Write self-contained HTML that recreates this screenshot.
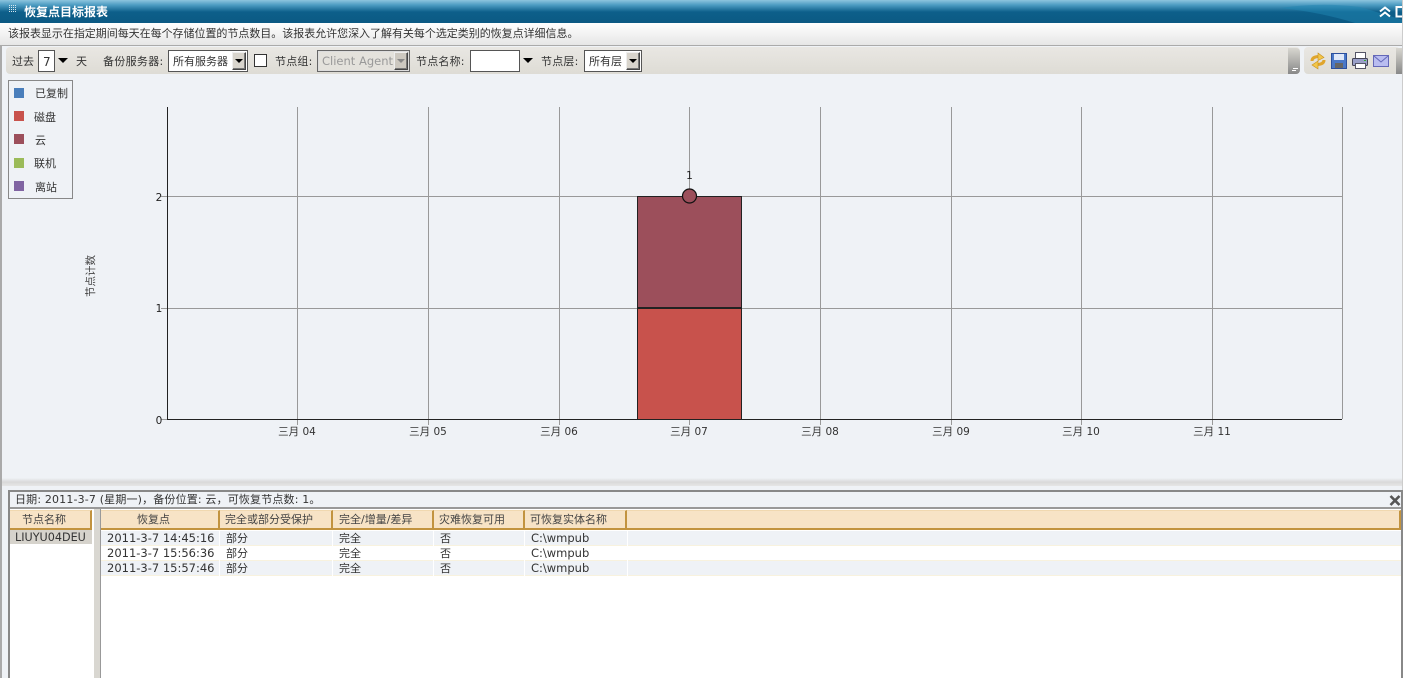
<!DOCTYPE html>
<html><head><meta charset="utf-8"><style>
html,body{margin:0;padding:0;width:1408px;height:678px;overflow:hidden;background:#eff2f6}
body{position:relative;font:11px "DejaVu Sans","Noto Sans CJK SC",sans-serif;color:#333}
.a{position:absolute;box-sizing:border-box}
.t{position:absolute;white-space:nowrap;line-height:14px;height:14px}
.sel{position:absolute;box-sizing:border-box;background:#fff;border:1px solid #fff;outline:1px solid #555;outline-offset:-1px}
.btn{position:absolute;width:14px;background:#d8d4cc;border:1px solid #444;border-top-color:#eee;border-left-color:#eee;box-sizing:border-box;box-shadow:inset -1px -1px 0 #777}
.tri{position:absolute;width:0;height:0;border-left:5px solid transparent;border-right:5px solid transparent;border-top:5px solid #000}
.h{position:absolute;top:510px;height:20px;background:#f7e3c6;border-right:2px solid #c2933f;border-bottom:2px solid #c2933f;box-sizing:border-box;border-top:1px solid #f0d8b0;text-align:left;line-height:17px;color:#444;white-space:nowrap}
.c{position:absolute;white-space:nowrap;line-height:15px;color:#333}
</style></head><body>
<div class="a" style="left:0;top:0;width:1403px;height:23px;background:linear-gradient(#8ec5de 0,#4d9cc2 5px,#0d5f8a 12px,#0c5a84 22px)"></div>
<svg class="a" style="left:1280px;top:0" width="123" height="23"><path d="M0 8Q40 2 80 7L123 20V23H75Q40 12 0 8Z" fill="#1f86b2" opacity=".5"/></svg>
<svg class="a" style="left:9px;top:5px" width="9" height="9"><g fill="#d8e8f0"><rect x="0" y="0" width="1" height="1"/><rect x="2" y="0" width="1" height="1"/><rect x="4" y="0" width="1" height="1"/><rect x="6" y="0" width="1" height="1"/><rect x="0" y="2" width="1" height="1"/><rect x="2" y="2" width="1" height="1"/><rect x="4" y="2" width="1" height="1"/><rect x="6" y="2" width="1" height="1"/><rect x="0" y="4" width="1" height="1"/><rect x="2" y="4" width="1" height="1"/><rect x="4" y="4" width="1" height="1"/><rect x="6" y="4" width="1" height="1"/><rect x="0" y="6" width="1" height="1"/><rect x="2" y="6" width="1" height="1"/><rect x="4" y="6" width="1" height="1"/><rect x="6" y="6" width="1" height="1"/></g></svg>
<div class="t" style="left:24px;top:5px;color:#fff;font-weight:bold;font-size:12px">恢复点目标报表</div>
<svg class="a" style="left:1378px;top:5px" width="26" height="13"><path d="M2 6.500 7 2.500 12 6.500M2 11.500 7 7.500 12 11.500" fill="none" stroke="#fff" stroke-width="2"/><path d="M25 2H18.500V11.500H25" fill="none" stroke="#fff" stroke-width="2"/></svg>

<div class="a" style="left:0;top:23px;width:1403px;height:23px;background:linear-gradient(#fff,#e6e6e6);border-bottom:1px solid #aaa"></div>
<div class="t" style="left:8px;top:27px;color:#333;letter-spacing:-.03px">该报表显示在指定期间每天在每个存储位置的节点数目。该报表允许您深入了解有关每个选定类别的恢复点详细信息。</div>

<div class="a" style="left:6px;top:47px;width:1294px;height:27px;background:linear-gradient(#e9e7e3,#dedcd5);border-radius:4px"></div>
<div class="a" style="left:1288px;top:48px;width:12px;height:26px;background:linear-gradient(#d8d6d0,#888);border-radius:0 4px 4px 0"></div>
<div class="a" style="left:1293px;top:68px;width:5px;height:1px;background:#fff"></div><div class="a" style="left:1292px;top:70px;width:4px;height:1px;background:#fff"></div>
<div class="a" style="left:1304px;top:47px;width:96px;height:27px;background:linear-gradient(#e9e7e3,#dedcd5);border-radius:4px"></div>
<div class="a" style="left:1396px;top:48px;width:7px;height:26px;background:linear-gradient(#d8d6d0,#888)"></div>

<div class="t" style="left:12px;top:55px">过去</div>
<div class="sel" style="left:38px;top:50px;width:17px;height:22px"></div>
<div class="t" style="left:43px;top:55px;font-size:12px">7</div>
<div class="tri" style="left:58px;top:58px"></div>
<div class="t" style="left:76px;top:55px">天</div>
<div class="t" style="left:103px;top:55px;letter-spacing:.3px">备份服务器:</div>
<div class="sel" style="left:168px;top:50px;width:80px;height:22px"></div>
<div class="t" style="left:173px;top:55px">所有服务器</div>
<div class="btn" style="left:232px;top:52px;height:18px"></div><div class="tri" style="left:235px;top:59px;border-width:4px 4px 0"></div>
<div class="a" style="left:254px;top:54px;width:13px;height:13px;background:#fff;border:1px solid #333"></div>
<div class="t" style="left:275px;top:55px;letter-spacing:.2px">节点组:</div>
<div class="a" style="left:317px;top:50px;width:93px;height:22px;background:#e4e2dc;border:1px solid #666;box-shadow:inset 0 0 0 1px #ddd"></div>
<div class="t" style="left:322px;top:54px;color:#999;font-size:11.5px">Client Agent</div>
<div class="btn" style="left:394px;top:52px;height:18px;background:#ccc8c0"></div><div class="tri" style="left:397px;top:59px;border-width:4px 4px 0;border-top-color:#888"></div>
<div class="t" style="left:416px;top:55px;letter-spacing:.2px">节点名称:</div>
<div class="sel" style="left:470px;top:50px;width:50px;height:22px"></div>
<div class="tri" style="left:523px;top:58px"></div>
<div class="t" style="left:541px;top:55px;letter-spacing:.2px">节点层:</div>
<div class="sel" style="left:584px;top:50px;width:58px;height:22px"></div>
<div class="t" style="left:589px;top:55px">所有层</div>
<div class="btn" style="left:626px;top:52px;height:18px"></div><div class="tri" style="left:629px;top:59px;border-width:4px 4px 0"></div>

<svg class="a" style="left:1308px;top:50px" width="84" height="22">
<path d="M4 11Q4 7 10 6.500" fill="none" stroke="#e0a52c" stroke-width="3"/>
<path d="M10 3 16 7.500 10 10.500Z" fill="#f2c64a" stroke="#c8901c" stroke-width=".6"/>
<path d="M16 10Q16 14 10 14.500" fill="none" stroke="#e0a52c" stroke-width="3"/>
<path d="M10 11 4 15 10 19Z" fill="#f2c64a" stroke="#c8901c" stroke-width=".6"/>
<rect x="23.500" y="3.500" width="15" height="15" fill="#4a78c8" stroke="#2c4f9c"/><rect x="26" y="4" width="10" height="6" fill="#dfe8f8"/><rect x="27" y="13" width="8" height="5" fill="#666"/>
<rect x="47.500" y="2.500" width="10" height="7" fill="#fff" stroke="#556"/><rect x="44.500" y="8.500" width="15" height="7" rx="1" fill="#9aa0c8" stroke="#445"/><rect x="47.500" y="13.500" width="10" height="5" fill="#fff" stroke="#556"/><rect x="56" y="10" width="2" height="1" fill="#3a3"/>
<rect x="65.500" y="5.500" width="15" height="11" fill="#b9bdf0" stroke="#6468b8"/><path d="M66 6 73 12 80 6" fill="none" stroke="#6468b8"/>
</svg>

<div class="a" style="left:0;top:46px;width:2px;height:632px;background:#aaa"></div>
<div class="a" style="left:1403px;top:0;width:5px;height:678px;background:#fff"></div>
<div class="a" style="left:1402px;top:0;width:1px;height:490px;background:#ccc"></div>

<div class="a" style="left:8px;top:80px;width:65px;height:119px;border:1px solid #888"></div>
<div class="a" style="left:14px;top:88px;width:10px;height:10px;background:#4a7ebb"></div><div class="t" style="left:35px;top:87px">已复制</div>
<div class="a" style="left:14px;top:111px;width:10px;height:10px;background:#c8524c"></div><div class="t" style="left:34px;top:111px">磁盘</div>
<div class="a" style="left:14px;top:134px;width:10px;height:10px;background:#9c4f5b"></div><div class="t" style="left:35px;top:134px">云</div>
<div class="a" style="left:14px;top:158px;width:10px;height:10px;background:#9bbb59"></div><div class="t" style="left:34px;top:157px">联机</div>
<div class="a" style="left:14px;top:181px;width:10px;height:10px;background:#8064a2"></div><div class="t" style="left:35px;top:181px">离站</div>

<svg class="a" style="left:0;top:0" width="1408" height="480" font-family="DejaVu Sans,Noto Sans CJK SC,sans-serif" font-size="10.5" fill="#222">
<g stroke="#999" stroke-width="1" shape-rendering="crispEdges">
<path d="M297.500 107V425M428.500 107V425M559.500 107V425M689.500 107V196M820.500 107V425M951.500 107V425M1081.500 107V425M1212.500 107V425M1342.500 107V419"/>
<path d="M161 196.500H1342M161 308.500H1342M161 419.500H167"/>
<path d="M689.500 419V425"/>
</g>
<path d="M167.500 107V419.500H1342" fill="none" stroke="#222" shape-rendering="crispEdges"/>
<rect x="637.500" y="196.500" width="104" height="111.500" fill="#9c4f5b" stroke="#222" shape-rendering="crispEdges"/>
<rect x="637.500" y="308.500" width="104" height="111" fill="#c8524c" stroke="#222" shape-rendering="crispEdges"/>
<rect x="637" y="307" width="105" height="2" fill="#222"/>
<circle cx="689.500" cy="196" r="7" fill="#9c4f5b" stroke="#111" stroke-width="1.200"/>
<text x="689.500" y="179" text-anchor="middle">1</text>
<text x="159" y="201" text-anchor="middle">2</text><text x="159" y="312" text-anchor="middle">1</text><text x="159" y="424" text-anchor="middle">0</text>
<g text-anchor="middle" fill="#333"><text x="297" y="435">三月 04</text><text x="428" y="435">三月 05</text><text x="559" y="435">三月 06</text><text x="689" y="435">三月 07</text><text x="820" y="435">三月 08</text><text x="951" y="435">三月 09</text><text x="1081" y="435">三月 10</text><text x="1212" y="435">三月 11</text></g>
<text transform="translate(94 276) rotate(-90)" text-anchor="middle" fill="#444">节点计数</text>
</svg>

<div class="a" style="left:2px;top:478px;width:1400px;height:8px;background:linear-gradient(#eff2f6,#d9d9d9 50%,#e6e6e6)"></div>

<div class="a" style="left:8px;top:490px;width:1395px;height:188px;border:1px solid #888;border-width:2px 2px 0 2px;background:#fff"></div>
<div class="a" style="left:10px;top:492px;width:1391px;height:16px;background:#eff2f6"></div>
<div class="a" style="left:10px;top:507px;width:1391px;height:2px;background:#999"></div>
<div class="t" style="left:15px;top:493px;letter-spacing:.16px">日期: 2011-3-7 (星期一)，备份位置: 云，可恢复节点数: 1。</div>
<svg class="a" style="left:1389px;top:495px" width="12" height="11"><path d="M1.500 1 10.500 10M10.500 1 1.500 10" stroke="#555" stroke-width="2.600"/></svg>

<div class="h" style="left:10px;width:82px;padding-left:12px">节点名称</div>
<div class="a" style="left:94px;top:509px;width:7px;height:169px;background:#d9d7d1;border-right:1px solid #999"></div>
<div class="a" style="left:10px;top:530px;width:82px;height:14px;background:#d6d3cc"></div>
<div class="c" style="left:15px;top:530px;font-size:11.2px">LIUYU04DEU</div>

<div class="h" style="left:101px;width:119px;padding-left:36px">恢复点</div>
<div class="h" style="left:220px;width:113px;padding-left:5px">完全或部分受保护</div>
<div class="h" style="left:333px;width:101px;padding-left:6px">完全/增量/差异</div>
<div class="h" style="left:434px;width:91px;padding-left:5px">灾难恢复可用</div>
<div class="h" style="left:525px;width:102px;padding-left:5px">可恢复实体名称</div>
<div class="h" style="left:627px;width:774px"></div>

<div class="a" style="left:101px;top:531px;width:1300px;height:14px;background:#eff2f6"></div>
<div class="a" style="left:101px;top:545px;width:1300px;height:1px;background:#f8f2de"></div>
<div class="a" style="left:101px;top:560px;width:1300px;height:1px;background:#f8f2de"></div>
<div class="a" style="left:101px;top:561px;width:1300px;height:14px;background:#eff2f6"></div>
<div class="a" style="left:101px;top:575px;width:1300px;height:1px;background:#f8f2de"></div>
<div class="a" style="left:219px;top:531px;width:1px;height:45px;background:#fff"></div>
<div class="a" style="left:332px;top:531px;width:1px;height:45px;background:#fff"></div>
<div class="a" style="left:433px;top:531px;width:1px;height:45px;background:#fff"></div>
<div class="a" style="left:524px;top:531px;width:1px;height:45px;background:#fff"></div>
<div class="a" style="left:627px;top:531px;width:1px;height:45px;background:#fff"></div>

<div class="c" style="left:107px;top:531px;font-size:11.5px">2011-3-7 14:45:16</div><div class="c" style="left:226px;top:531px">部分</div><div class="c" style="left:339px;top:531px">完全</div><div class="c" style="left:440px;top:531px">否</div><div class="c" style="left:531px;top:531px;font-size:11.5px">C:\wmpub</div>
<div class="c" style="left:107px;top:546px;font-size:11.5px">2011-3-7 15:56:36</div><div class="c" style="left:226px;top:546px">部分</div><div class="c" style="left:339px;top:546px">完全</div><div class="c" style="left:440px;top:546px">否</div><div class="c" style="left:531px;top:546px;font-size:11.5px">C:\wmpub</div>
<div class="c" style="left:107px;top:561px;font-size:11.5px">2011-3-7 15:57:46</div><div class="c" style="left:226px;top:561px">部分</div><div class="c" style="left:339px;top:561px">完全</div><div class="c" style="left:440px;top:561px">否</div><div class="c" style="left:531px;top:561px;font-size:11.5px">C:\wmpub</div>
</body></html>
